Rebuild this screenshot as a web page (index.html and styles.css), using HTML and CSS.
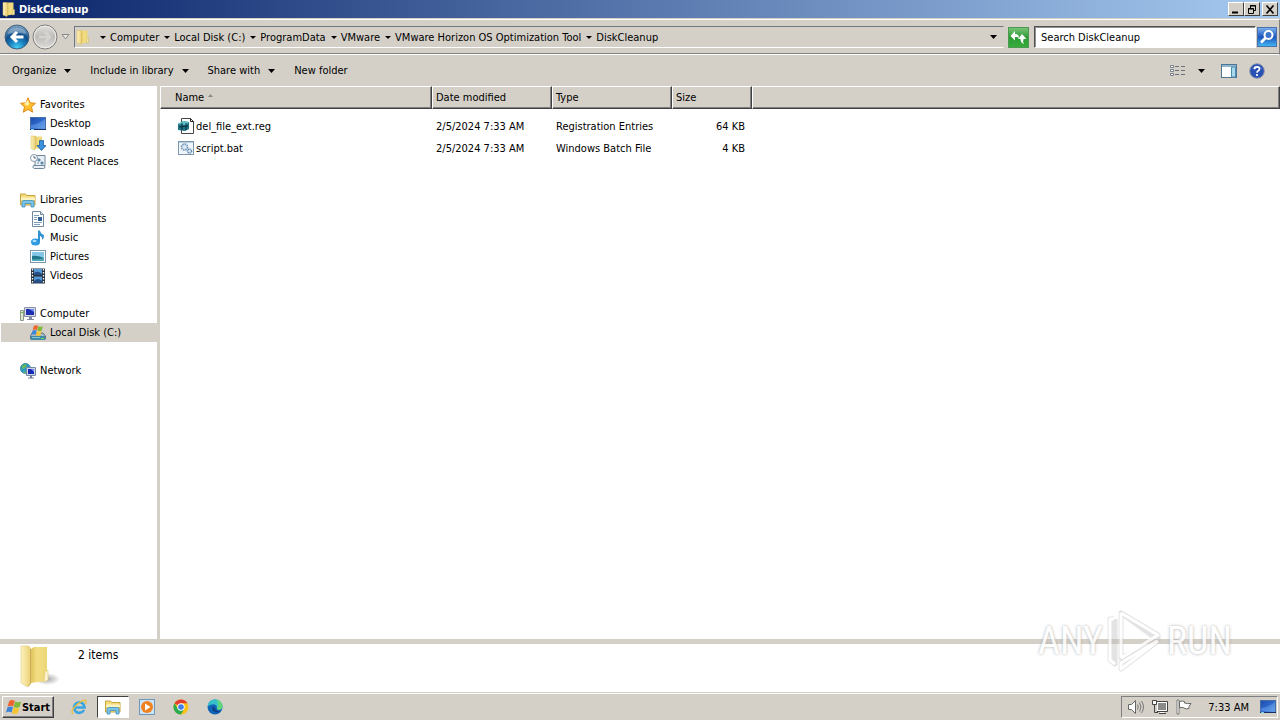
FILE: index.html
```html
<!DOCTYPE html>
<html lang="en">
<head>
  <meta charset="UTF-8">
  <title>DiskCleanup</title>
  <link rel="stylesheet" href="styles.css">
</head>
<body>

  <!-- Shared icons -->
  <svg class="sprite" width="0" height="0" aria-hidden="true">
    <defs>
      <linearGradient id="gFolder" x1="0" x2="1" y1="0" y2="0">
        <stop offset="0" stop-color="#dcbc52"/><stop offset="0.4" stop-color="#f3de85"/><stop offset="1" stop-color="#ecd677"/>
      </linearGradient>
      <linearGradient id="gFlap" x1="0" x2="1" y1="0" y2="0">
        <stop offset="0" stop-color="#fdf3bf"/><stop offset="1" stop-color="#eacf72"/>
      </linearGradient>
      <radialGradient id="gShadow">
        <stop offset="0" stop-color="#000" stop-opacity="0.35"/><stop offset="1" stop-color="#000" stop-opacity="0"/>
      </radialGradient>
      <radialGradient id="gBack" cx="0.5" cy="0.95" r="0.95">
        <stop offset="0" stop-color="#45d0f5"/><stop offset="0.35" stop-color="#1a7fbe"/><stop offset="0.6" stop-color="#0f4f8c"/><stop offset="1" stop-color="#86a9c8"/>
      </radialGradient>
      <linearGradient id="gForward" x1="0" x2="0" y1="0" y2="1">
        <stop offset="0" stop-color="#e2e0dc"/><stop offset="0.5" stop-color="#bebcb8"/><stop offset="1" stop-color="#e0deda"/>
      </linearGradient>
      <linearGradient id="gScreen" x1="0" x2="1" y1="0" y2="1">
        <stop offset="0" stop-color="#1c4aa8"/><stop offset="0.5" stop-color="#2f68cc"/><stop offset="1" stop-color="#6aa5ec"/>
      </linearGradient>
      <linearGradient id="gGreen" x1="0" x2="0" y1="0" y2="1">
        <stop offset="0" stop-color="#7cc57a"/><stop offset="0.5" stop-color="#2c9a35"/><stop offset="1" stop-color="#38ad3c"/>
      </linearGradient>
      <linearGradient id="gSearch" x1="0" x2="0" y1="0" y2="1">
        <stop offset="0" stop-color="#7fb4ec"/><stop offset="0.5" stop-color="#1d55bf"/><stop offset="1" stop-color="#43b8f2"/>
      </linearGradient>
    </defs>

    <symbol id="folder" viewBox="0 0 16 16">
      <path d="M6 2.500l1-1h5.500v12L6 14.500z" fill="url(#gFolder)"/>
      <path d="M2 1.500h4.500v12L6 15.500l-4-1.500z" fill="url(#gFlap)" stroke="#d9be62" stroke-width=".5"/>
      <path d="M12 9l1.500-.5v5l-2 .5z" fill="#f9efbd" stroke="#cdb04f" stroke-width=".5"/>
    </symbol>

    <symbol id="library" viewBox="0 0 16 16">
      <path d="M0.500 3V2h5l1 1.500h8.500V13H.5z" fill="#f4dc78" stroke="#c6a440"/>
      <path d="M1 5.500h14V8H1z" fill="#fdf3c0"/>
      <path d="M2 15v-5q0-1.500 1.500-1.500h9Q14 8.500 14 10v5h-3v-3.500H5V15z" fill="#7cc3e8" stroke="#3f8fc0" stroke-width=".8"/>
    </symbol>

    <symbol id="screen" viewBox="0 0 16 16">
      <rect x="0.500" y="1.500" width="15" height="12" fill="url(#gScreen)" stroke="#4a6ea6"/>
      <path d="M1 12V9q8-1 14-6v9z" fill="#6fa8ec" opacity=".45"/>
      <path d="M0 13.500h16" stroke="#162f63"/>
      <path d="M1 13.500h3" stroke="#6fd0e8"/>
    </symbol>

    <symbol id="windows" viewBox="0 0 20 18">
      <path d="M4 1.500q3.500-2.500 7 0L9 8.500Q6 6.500 2 8.500z" fill="#ef6530"/>
      <path d="M11.500 2q3.500 2 7.500 0L17 9q-3.500 2-7.500 0z" fill="#7db93a"/>
      <path d="M1.800 9.300q3.700-2 7 0L7 16q-3-2-7 0z" fill="#3e86d8"/>
      <path d="M9.300 9.700q3.300 2 7.500 0l-2 7q-4 2-7.500 0z" fill="#f8c634"/>
    </symbol>

    <symbol id="arrow" viewBox="0 0 7 4">
      <path d="M0 0h7L3.500 4z" fill="#000"/>
    </symbol>
  </svg>

  <header class="titlebar">
    <svg class="icon"><use href="#folder"/></svg>
    <h1>DiskCleanup</h1>
    <div class="window-buttons">
      <button aria-label="Minimize"><svg width="10" height="9"><path d="M1 7.500h6" stroke="#000" stroke-width="2"/></svg></button>
      <button aria-label="Restore"><svg width="10" height="9"><path d="M3.500 3V.5h5v5H7M3 1h6M1 4h6M1.500 3.500h5v5h-5z" fill="none" stroke="#000"/></svg></button>
      <button class="close" aria-label="Close"><svg width="10" height="9"><path d="M1.500.5l7 8M8.500.5l-7 8" stroke="#000" stroke-width="1.600"/></svg></button>
    </div>
  </header>

  <nav class="navbar">
    <div class="history">
      <button aria-label="Back">
        <svg width="26" height="26" viewBox="0 0 26 26"><circle cx="13" cy="13" r="12" fill="url(#gBack)" stroke="#42617d"/><path d="M3.500 10a10 9 0 0 1 19 0q-9-2-19 0z" fill="#fff" opacity=".3"/><path d="M19.500 13H8M13 8l-5 5 5 5" fill="none" stroke="#fff" stroke-width="3"/></svg>
      </button>
      <button aria-label="Forward">
        <svg width="26" height="26" viewBox="0 0 26 26"><circle cx="13" cy="13" r="12" fill="url(#gForward)" stroke="#7f7e7b"/><circle cx="13" cy="13" r="10.800" fill="none" stroke="#efeeec"/><path d="M7 13h11M13 8l5 5-5 5" fill="none" stroke="#d6d4d0" stroke-width="2.500"/></svg>
      </button>
      <button class="recent" aria-label="Recent pages">
        <svg width="9" height="6"><path d="M1 .5h7L4.500 5z" fill="#e8e6e2" stroke="#8b8983"/></svg>
      </button>
    </div>
    <div class="address">
      <svg class="icon"><use href="#folder"/></svg>
      <ol class="crumbs">
        <li><a href="#">Computer</a></li>
        <li><a href="#">Local Disk (C:)</a></li>
        <li><a href="#">ProgramData</a></li>
        <li><a href="#">VMware</a></li>
        <li><a href="#">VMware Horizon OS Optimization Tool</a></li>
        <li><a href="#">DiskCleanup</a></li>
      </ol>
      <button class="drop" aria-label="Previous locations"><svg class="arrow"><use href="#arrow"/></svg></button>
    </div>
    <button class="refresh" aria-label="Refresh">
      <svg width="21" height="21" viewBox="0 0 21 21"><rect x="0.500" y="0.500" width="20" height="20" fill="url(#gGreen)" stroke="#4c9a50"/><path d="M2.500 9L7 4v3q4 0 4 4-1.500-1.500-4-1v3.500z" fill="#fff"/><path d="M18.500 12L14 7l-4 5h2.500q0 4 3.500 5-1.500-2-.5-5z" fill="#fff"/></svg>
    </button>
    <form class="search">
      <input type="text" placeholder="Search DiskCleanup" aria-label="Search DiskCleanup">
      <button type="button" aria-label="Search">
        <svg width="20" height="20" viewBox="0 0 20 20"><rect x="0.500" y="0.500" width="19" height="19" fill="url(#gSearch)" stroke="#4a72ac"/><circle cx="11.500" cy="8" r="4" fill="#3b73cc" stroke="#fff" stroke-width="2"/><path d="M8.500 11L4 15.500" stroke="#fff" stroke-width="2.600"/></svg>
      </button>
    </form>
  </nav>

  <div class="toolbar">
    <button>Organize <svg class="arrow"><use href="#arrow"/></svg></button>
    <button>Include in library <svg class="arrow"><use href="#arrow"/></svg></button>
    <button>Share with <svg class="arrow"><use href="#arrow"/></svg></button>
    <button>New folder</button>
    <div class="view-buttons">
      <button aria-label="Change view">
        <svg width="16" height="12" viewBox="0 0 16 12"><path d="M.5.500h3v2h-3zM.5 4.500h3v2h-3zM.5 8.500h3v2h-3z" fill="#fff" stroke="#77808b"/><path d="M5 1.500h4M11 1.500h4M5 5.500h4M11 5.500h4M5 9.500h4M11 9.500h4" stroke="#68707a"/></svg>
      </button>
      <button aria-label="More view options"><svg class="arrow"><use href="#arrow"/></svg></button>
      <button class="pane" aria-label="Preview pane">
        <svg width="16" height="14" viewBox="0 0 16 14"><rect x="0.500" y="0.500" width="15" height="13" fill="#fff" stroke="#4e7590"/><path d="M1 2h14" stroke="#8db6d0" stroke-width="2"/><path d="M10.500 3h4v10h-4z" fill="#a6d8ee" stroke="#4e8db2"/></svg>
      </button>
      <button aria-label="Help">
        <svg width="16" height="16" viewBox="0 0 16 16"><circle cx="8" cy="8" r="7.300" fill="#2950b5" stroke="#8d97ae"/><path d="M3 6a5.500 5 0 0 1 10 0q-5-2-10 0z" fill="#fff" opacity=".3"/><path d="M5.500 6.200q0-2.400 2.500-2.400t2.500 2.100q0 1.200-1.300 1.900Q8 8.500 8 9.800M8 11v2" fill="none" stroke="#fff" stroke-width="1.700"/></svg>
      </button>
    </div>
  </div>

  <main class="explorer">
    <aside class="sidebar">
      <ul>
        <li class="group"><a href="#"><svg class="icon" viewBox="0 0 16 16"><path d="M8 .8l2.100 5 5.400.5-4 3.600 1.200 5.300L8 12.400l-4.700 2.800 1.200-5.300-4-3.600 5.400-.5z" fill="#ffc02c" stroke="#e08a1e"/><path d="M8 3l1.300 3.800L8 9 4 7z" fill="#fff0a8"/></svg>Favorites</a></li>
        <li><a href="#"><svg class="icon"><use href="#screen"/></svg>Desktop</a></li>
        <li><a href="#"><svg class="icon" viewBox="0 0 16 16"><path d="M5 1.500h7v12H5z" fill="url(#gFolder)"/><path d="M1 1h4.500v12L5 15l-4-1.500z" fill="url(#gFlap)" stroke="#d9be62" stroke-width=".5"/><path d="M9.500 5.500h4v5H16l-4.500 5L7 10.500h2.500z" fill="#3a92dc" stroke="#1f5da0" stroke-width=".8"/></svg>Downloads</a></li>
        <li><a href="#"><svg class="icon" viewBox="0 0 16 16"><path d="M5 1.500h10v10H5zM3.500 11.500h11q1.500 3-1 3H4q-2-1-.5-3z" fill="#e9f0f5" stroke="#70879a"/><path d="M8 5h2v2H8zM11 8h2v2h-2zM7 9h2" fill="#6fa3c9" stroke="#547e9c" stroke-width=".8"/><circle cx="4" cy="4" r="3.500" fill="#fff" stroke="#8598a8"/><path d="M4 2v2h2" fill="none" stroke="#51687c"/></svg>Recent Places</a></li>
      </ul>
      <ul>
        <li class="group"><a href="#"><svg class="icon"><use href="#library"/></svg>Libraries</a></li>
        <li><a href="#"><svg class="icon" viewBox="0 0 16 16"><path d="M2.500.5h8l3 3v12h-11z" fill="#fff" stroke="#71889c"/><path d="M10.500.5v3h3" fill="#c7dbea" stroke="#71889c"/><path d="M4 4.500h5M4 6.500h3M4 8.500h3M4 11.500h8M4 13.500h6" stroke="#7ca0c0"/><path d="M8 6h4v4H8z" fill="#2f5f94"/></svg>Documents</a></li>
        <li><a href="#"><svg class="icon" viewBox="0 0 16 16"><ellipse cx="5.500" cy="12" rx="4.500" ry="3.500" fill="#2e9be0"/><path d="M8 12V.5h2q.5 3 4 4.500.5 3-2 5 .5-3.500-2-4V12z" fill="#3293d3"/><ellipse cx="4.500" cy="11" rx="2" ry="1.200" fill="#a9dcf8"/></svg>Music</a></li>
        <li><a href="#"><svg class="icon" viewBox="0 0 16 16"><rect x="0.500" y="1.500" width="15" height="12" fill="#fff" stroke="#7a96ab"/><path d="M2 3h12v9H2z" fill="#83c6e8"/><path d="M2 7q5-1 12 2v3H2z" fill="#22768b"/><path d="M2 10q6 1 12-1v3H2z" fill="#4fa7b5"/></svg>Pictures</a></li>
        <li><a href="#"><svg class="icon" viewBox="0 0 16 16"><path d="M1 .5h14v15H1z" fill="#26333f"/><path d="M4 1h8v6H4zM4 8.500h8V15H4z" fill="#539bd6"/><path d="M4 5q4-3 8 1v1H4zM4 13q4-4 8 0v2H4z" fill="#244f86"/><path d="M2.500 1v14M13.500 1v14" stroke="#fff" stroke-width="1.300" stroke-dasharray="1.500 1.500"/></svg>Videos</a></li>
      </ul>
      <ul>
        <li class="group"><a href="#"><svg class="icon" viewBox="0 0 16 16"><path d="M.5 4.500h3v10h-3z" fill="#dce6d4" stroke="#8b9a86"/><path d="M1 6.500h2" stroke="#72b840"/><path d="M4.500 1.500h11v9h-11z" fill="#d6dbe6" stroke="#8790a6"/><path d="M6 3h8v6H6z" fill="#1d2fb0"/><path d="M9 3h5v3z" fill="#6f8df0"/><path d="M9 11h3v2h2v1H7v-1h2z" fill="#808aa0"/></svg>Computer</a></li>
        <li class="selected"><a href="#"><svg class="icon" viewBox="0 0 16 16"><path d="M2 8h11l2.500 3v3H.5v-3z" fill="#a7b8c4" stroke="#5e7482"/><path d="M1 11h14v4H1z" fill="#3d8ba4"/><path d="M2 12.500h8" stroke="#8cc4d4"/><path d="M11 13.500h3" stroke="#7de05a"/><use href="#windows" x="1" y="0" width="13" height="11"/></svg>Local Disk (C:)</a></li>
      </ul>
      <ul>
        <li class="group"><a href="#"><svg class="icon" viewBox="0 0 16 16"><circle cx="5.500" cy="5.500" r="5" fill="#2d9cc4" stroke="#28788f" stroke-width=".8"/><path d="M2 3q3-3 5-1L5 5 2 6zM3 8l3 1-1 2z" fill="#66ba5c"/><path d="M6.500 4.500h9v8h-9z" fill="#ccd5e6" stroke="#7788a4"/><path d="M8 6h6v5H8z" fill="#182ab4"/><path d="M11 6h3v3z" fill="#6f8df0"/><path d="M10 13h2v1.500h2v1H8v-1h2z" fill="#74819a"/></svg>Network</a></li>
      </ul>
    </aside>

    <section class="files">
      <table>
        <thead>
          <tr>
            <th class="col-name">Name <svg class="sort" width="5" height="3"><path d="M0 3h5L2.500 0z" fill="#8c8a86"/></svg></th>
            <th class="col-date">Date modified</th>
            <th class="col-type">Type</th>
            <th class="col-size">Size</th>
            <th class="col-rest"></th>
          </tr>
        </thead>
        <tbody>
          <tr>
            <td><div class="file"><svg class="icon" viewBox="0 0 16 16"><path d="M3.500.5h9l3 3v12h-12z" fill="#fff" stroke="#444"/><path d="M12.500.5v3h3" fill="none" stroke="#222"/><path d="M0 6l5-3 6 1v7l-4 2-7-1z" fill="#1d7585"/><path d="M0 6l5-3 6 1-3 3z" fill="#62c6cc"/><path d="M4 5v7M8 5v7M1 9l9-1" stroke="#0b2d3b"/></svg>del_file_ext.reg</div></td>
            <td>2/5/2024 7:33 AM</td>
            <td>Registration Entries</td>
            <td class="size">64 KB</td>
            <td></td>
          </tr>
          <tr>
            <td><div class="file"><svg class="icon" viewBox="0 0 16 16"><rect x="0.500" y="1.500" width="15" height="13" fill="#eef5fb" stroke="#7f97ad"/><path d="M1 2.500h14" stroke="#b6cfe3"/><circle cx="6.500" cy="7" r="3" fill="#dbe9f4" stroke="#7b9ebc" stroke-width="1.800" stroke-dasharray="1.600 .7"/><circle cx="11.500" cy="11" r="2" fill="#dbe9f4" stroke="#6b90b4" stroke-width="1.500" stroke-dasharray="1.200 .5"/></svg>script.bat</div></td>
            <td>2/5/2024 7:33 AM</td>
            <td>Windows Batch File</td>
            <td class="size">4 KB</td>
            <td></td>
          </tr>
        </tbody>
      </table>
    </section>
  </main>

  <section class="details">
    <svg width="40" height="44" viewBox="0 0 40 44">
      <ellipse cx="27" cy="34" rx="13" ry="6" fill="url(#gShadow)"/>
      <path d="M10 5l4-3h13v34l-17 2z" fill="url(#gFolder)"/>
      <path d="M1 1h8l2 3v34l-3 4-7-4z" fill="url(#gFlap)" stroke="#e2ca78" stroke-width=".6"/>
      <path d="M10.500 4v34l-2 3" fill="none" stroke="#c3a54c" stroke-width=".8"/>
      <path d="M25 27l3-2v10l-4 2z" fill="#fbf4d2" stroke="#dfc873" stroke-width=".6"/>
    </svg>
    <p>2 items</p>
  </section>

  <footer class="taskbar">
    <button class="start"><svg width="16" height="16"><use href="#windows"/></svg>Start</button>
    <div class="tasks">
      <button aria-label="Internet Explorer">
        <svg class="icon" viewBox="0 0 16 16"><path d="M13 11A5.300 5.300 0 1 1 13.600 8.500H4" fill="none" stroke="#39a5e0" stroke-width="2.600"/><path d="M2 15Q-1 12 5 6.500T14.500 1.200q1.500 1-.5 4" fill="none" stroke="#e9bd3c" stroke-width="1.300"/></svg>
      </button>
      <button class="active" aria-label="Explorer"><svg class="icon"><use href="#library"/></svg></button>
      <button aria-label="Media Player">
        <svg class="icon" viewBox="0 0 16 16"><rect x="0.500" y="0.500" width="15" height="15" fill="#cfe5f5" stroke="#6898c0"/><circle cx="8" cy="8" r="6" fill="#ef8220"/><path d="M6 4.500v7L11.500 8z" fill="#fff"/></svg>
      </button>
      <button aria-label="Chrome">
        <svg class="icon" viewBox="0 0 16 16"><circle cx="8" cy="8" r="7.500" fill="#fbc116"/><path d="M8 8L1.500 4.200A7.500 7.500 0 0 1 14.500 4.300H8z" fill="#e33b2e"/><path d="M1.500 4.200A7.500 7.500 0 0 0 8 15.500l3.200-5.600L8 8 5 10z" fill="#2da94f"/><circle cx="8" cy="8" r="3.700" fill="#fff"/><circle cx="8" cy="8" r="2.800" fill="#3f7ee8"/></svg>
      </button>
      <button aria-label="Edge">
        <svg class="icon" viewBox="0 0 16 16"><circle cx="8" cy="8" r="7.500" fill="#0f64b8"/><path d="M.5 8A7.500 7.500 0 0 1 15.500 7.500q0 3.200-3.500 3.200-3 0-2-2.200Q9 4.500 5 5.500.8 6.500.5 8z" fill="#35c0ca"/><path d="M9 .7q6.500 1 6.500 7Q15 10.700 12 10.700q-2.500 0-2-1.700Q13 5 9 .7z" fill="#62d67b"/><path d="M6 7q-2 4 2 6 3 1.300 6-1-5 1-6-3z" fill="#103f86"/></svg>
      </button>
    </div>
    <div class="tray">
      <svg class="icon" viewBox="0 0 16 16"><path d="M.5 5.500h3l4-4v13l-4-4h-3z" fill="#fff" stroke="#666"/><path d="M9.500 5.500q1.500 2.500 0 5M11.500 3.500q3 4.500 0 9M13.500 2q4 6 0 12" fill="none" stroke="#777"/></svg>
      <svg class="icon" viewBox="0 0 16 16"><path d="M5.500 3.500h9v8h-9z" fill="#8a8a88" stroke="#fff"/><path d="M5 2.500h10.500v10H5M7 14.500h7M.5 1.500h4v4h-4zM2.500 6v7.500H6" fill="none" stroke="#444"/><path d="M1 2h3v3H1zM8 13h4v1H8z" fill="#fff"/></svg>
      <svg class="icon" viewBox="0 0 16 16"><path d="M1 1h2v14H1z" fill="#fff" stroke="#666" stroke-width=".8"/><path d="M3.500 2.500q3-1 5 0v1.500q3 1 6.500.5l-2 3 0 2q-3 1-5-.5t-4.500 0z" fill="#fff" stroke="#666"/></svg>
      <time>7:33 AM</time>
      <svg class="icon"><use href="#screen"/></svg>
    </div>
  </footer>

  <div class="watermark">
    <span>ANY</span>
    <svg width="60" height="64" viewBox="0 0 60 64" fill="none" stroke-linejoin="round">
      <g stroke="#bbb" stroke-width="5" opacity=".5">
        <path d="M16 4v45l37-18zM16 4l37 22v6L16 60v-6l36-22M9 10H5v41l5 4V10"/>
      </g>
      <g stroke="#fff" stroke-width="3">
        <path d="M16 4v45M16 4l37 22L16 49M53 32L16 60v-6l36-22M9 10H5v41l5 4"/>
      </g>
    </svg>
    <span>RUN</span>
  </div>

</body>
</html>
```
FILE: styles.css
```css
* {
  box-sizing: border-box;
}

body {
  display: flex;
  flex-direction: column;
  min-height: 100vh;
  margin: 0;
  background: #d4d0c8;
  color: #000;
  font-family: Tahoma, "DejaVu Sans Condensed", "DejaVu Sans", sans-serif;
  font-size: 11px;
  line-height: 15px;
}

.sprite {
  position: absolute;
}

button {
  display: flex;
  align-items: center;
  justify-content: center;
  padding: 0;
  border: none;
  background: none;
  color: inherit;
  font: inherit;
}

a {
  color: inherit;
  text-decoration: none;
}

ul, ol {
  list-style: none;
  margin: 0;
  padding: 0;
}

.icon {
  width: 16px;
  height: 16px;
  flex-shrink: 0;
}

.arrow {
  width: 7px;
  height: 4px;
}

/* Title bar */
.titlebar {
  display: flex;
  align-items: center;
  gap: 2px;
  height: 18px;
  padding: 0 2px 0 1px;
  background: linear-gradient(to right, #0a246a, #a6caf0);
  color: white;
}

.titlebar h1 {
  margin: 0;
  font-size: 11px;
}

.window-buttons {
  display: flex;
  margin-left: auto;
}

.window-buttons button {
  width: 16px;
  height: 14px;
  background: #d4d0c8;
  border: 1px solid;
  border-color: #fff #404040 #404040 #fff;
}

.window-buttons .close {
  margin-left: 2px;
}

/* Address row */
.navbar {
  display: flex;
  align-items: center;
  height: 36px;
  margin-top: 1px;
  padding: 0 2px 0 4px;
  border-top: 1px solid #fff;
  border-bottom: 1px solid #fff;
  border-right: 1px solid #808080;
  box-shadow: inset 0 -1px #808080;
}

.history {
  display: flex;
  align-items: center;
  gap: 2px;
}

.recent {
  width: 10px;
  margin-right: 4px;
}

.address {
  display: flex;
  flex: 1;
  align-items: center;
  height: 22px;
  border: 1px solid;
  border-color: #6f7780 #d4d0c8 #fff #6f7780;
}

.crumbs {
  display: flex;
  margin-left: 4px;
}

.crumbs li {
  display: flex;
  align-items: center;
}

.crumbs li::before {
  content: "";
  margin: 0 4px 0 5px;
  border: 3px solid transparent;
  border-top-color: #000;
  border-bottom: none;
}

.drop {
  width: 20px;
  margin-left: auto;
}

.refresh {
  margin: 0 5px 0 4px;
}

.search {
  display: flex;
  align-items: center;
  gap: 1px;
  width: 243px;
}

.search input {
  flex: 1;
  min-width: 0;
  height: 22px;
  padding: 0 6px;
  border: 1px solid;
  border-color: #505050 #fff #fff #505050;
  box-shadow: inset 1px 1px #909090;
  background: white;
  font: inherit;
}

.search input::placeholder {
  color: #000;
}

/* Command bar */
.toolbar {
  display: flex;
  align-items: center;
  gap: 19px;
  height: 31px;
  padding: 0 15px 0 12px;
}

.toolbar button {
  gap: 8px;
}

.view-buttons {
  display: flex;
  align-items: center;
  gap: 12px;
  margin-left: auto;
}

.view-buttons .pane {
  padding: 0 0 0 4px;
}

/* Sidebar and file list */
.explorer {
  display: flex;
  flex: 1;
  background: white;
}

.sidebar {
  display: flex;
  flex-direction: column;
  gap: 19px;
  width: 160px;
  padding: 9px 0 9px 1px;
  border-right: 3px solid #d4d0c8;
}

.sidebar a {
  display: flex;
  align-items: center;
  gap: 4px;
  height: 19px;
  padding-left: 29px;
}

.sidebar .group a {
  padding-left: 19px;
}

.sidebar .selected {
  background: #d4d0c8;
}

.files {
  flex: 1;
}

table {
  width: 100%;
  table-layout: fixed;
  border-collapse: separate;
  border-spacing: 0;
}

th {
  height: 23px;
  padding: 0 3px;
  background: #d4d0c8;
  border: 1px solid;
  border-color: #fff #404040 #404040 #fff;
  box-shadow: inset -1px -1px #808080;
  font-weight: normal;
  text-align: left;
}

.col-name {
  width: 272px;
  padding-left: 14px;
}

.sort {
  margin: 0 0 4px 1px;
}

.col-date, .col-type {
  width: 120px;
}

.col-size {
  width: 80px;
}

tbody::before {
  content: "";
  display: block;
  height: 6px;
}

td {
  height: 22px;
  padding: 0 5px 0 4px;
}

.size {
  padding-right: 7px;
  text-align: right;
}

.file {
  display: flex;
  align-items: center;
  gap: 2px;
  padding-left: 14px;
}

/* Details pane */
.details {
  display: flex;
  gap: 18px;
  height: 54px;
  padding: 1px 20px 0;
  background: white;
  border-top: 5px solid #d4d0c8;
  border-bottom: 1px solid #d4d0c8;
}

.details p {
  margin: 3px 0;
  font-size: 12px;
}

/* Taskbar */
.taskbar {
  display: flex;
  align-items: center;
  height: 27px;
  padding: 0 2px;
  border-top: 1px solid #fff;
}

.start {
  width: 52px;
  height: 22px;
  border: 1px solid;
  border-color: #fff #404040 #404040 #fff;
  box-shadow: inset -1px -1px #808080;
  font-weight: bold;
}

.tasks {
  display: flex;
  gap: 2px;
  margin-left: 9px;
}

.tasks button {
  width: 32px;
  height: 22px;
  border: 1px solid transparent;
}

.tasks .active {
  background: white;
  border-color: #404040 #fff #fff #404040;
}

.tray {
  display: flex;
  align-items: center;
  gap: 8px;
  height: 22px;
  margin-left: auto;
  padding: 0 1px 0 6px;
  border: 1px solid;
  border-color: #808080 #fff #fff #808080;
}

.tray time {
  margin: 0 3px 0 8px;
}

/* Watermark over the window */
.watermark {
  position: absolute;
  right: 48px;
  bottom: 47px;
  display: flex;
  align-items: center;
  gap: 2px;
  color: #fff;
  font-family: "Roboto Condensed", "Liberation Sans Narrow", Roboto, sans-serif;
  font-size: 38px;
  line-height: 64px;
  text-shadow: 0 0 3px #999;
  opacity: 0.8;
  pointer-events: none;
}
```
